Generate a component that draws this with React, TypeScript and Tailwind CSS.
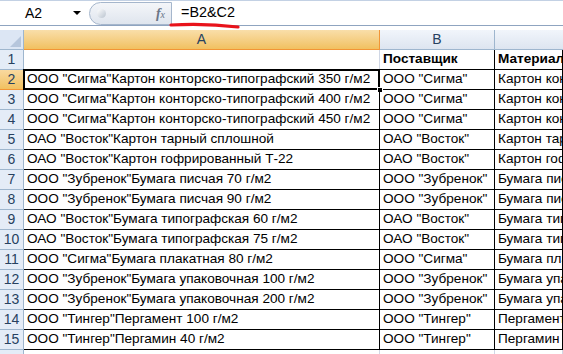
import React from 'react';

const rows: [string, string, string][] = [
  ['ООО "Сигма"Картон конторско-типографский 350 г/м2', 'ООО "Сигма"', 'Картон конторско-типографский 350 г/м2'],
  ['ООО "Сигма"Картон конторско-типографский 400 г/м2', 'ООО "Сигма"', 'Картон конторско-типографский 400 г/м2'],
  ['ООО "Сигма"Картон конторско-типографский 450 г/м2', 'ООО "Сигма"', 'Картон конторско-типографский 450 г/м2'],
  ['ОАО "Восток"Картон тарный сплошной', 'ОАО "Восток"', 'Картон тарный сплошной'],
  ['ОАО "Восток"Картон гофрированный Т-22', 'ОАО "Восток"', 'Картон гофрированный Т-22'],
  ['ООО "Зубренок"Бумага писчая 70 г/м2', 'ООО "Зубренок"', 'Бумага писчая 70 г/м2'],
  ['ООО "Зубренок"Бумага писчая 90 г/м2', 'ООО "Зубренок"', 'Бумага писчая 90 г/м2'],
  ['ОАО "Восток"Бумага типографская 60 г/м2', 'ОАО "Восток"', 'Бумага типографская 60 г/м2'],
  ['ОАО "Восток"Бумага типографская 75 г/м2', 'ОАО "Восток"', 'Бумага типографская 75 г/м2'],
  ['ООО "Сигма"Бумага плакатная 80 г/м2', 'ООО "Сигма"', 'Бумага плакатная 80 г/м2'],
  ['ООО "Зубренок"Бумага упаковочная 100 г/м2', 'ООО "Зубренок"', 'Бумага упаковочная 100 г/м2'],
  ['ООО "Зубренок"Бумага упаковочная 200 г/м2', 'ООО "Зубренок"', 'Бумага упаковочная 200 г/м2'],
  ['ООО "Тингер"Пергамент 100 г/м2', 'ООО "Тингер"', 'Пергамент 100 г/м2'],
  ['ООО "Тингер"Пергамин 40 г/м2', 'ООО "Тингер"', 'Пергамин 40 г/м2'],
];

const font = { fontFamily: '"Liberation Sans", Arial, sans-serif' };

const RowHead: React.FC<{ n: number; active?: boolean }> = ({ n, active }) => (
  <div
    className={
      'h-[20px] flex items-center justify-center text-[14px] border-r border-b ' +
      (active
        ? 'bg-gradient-to-b from-[#f9d99f] to-[#f1c15f] border-[#f29536] text-[#27415f]'
        : 'bg-[#e4ecf7] border-[#9eb6ce] text-[#27415f]')
    }
  >
    {n}
  </div>
);

const Cell: React.FC<{ children?: React.ReactNode; bold?: boolean; light?: boolean }> = ({ children, bold, light }) => (
  <div
    className={
      'h-[20px] pl-[3px] flex items-center overflow-hidden whitespace-nowrap text-[13.6px] text-black border-r border-b ' +
      (bold ? 'font-bold ' : '') +
      (light ? 'border-[#d0d7e5]' : 'border-black')
    }
  >
    {children}
  </div>
);

export default function App() {
  return (
    <div className="w-[563px] h-[354px] overflow-hidden bg-white relative" style={font}>
      {/* formula bar */}
      <div className="h-[25px] flex items-center border-t border-[#c3d1e4] bg-white">
        <div className="w-[89px] flex items-center pl-[25px] text-[14px] text-black">
          <span>A2</span>
          <span className="ml-auto mr-[8px] w-0 h-0 border-l-[4px] border-r-[4px] border-t-[4px] border-l-transparent border-r-transparent border-t-black" />
        </div>
        <div className="w-[83px] h-[23px] rounded-l-full border border-[#a5b6cc] bg-gradient-to-b from-[#f4f6f9] to-[#dfe5ee] flex items-center">
          <div className="w-[9px] h-[9px] rounded-full bg-gradient-to-br from-white to-[#b9c3cf] ml-[7px]" />
          <span className="ml-auto mr-[6px] text-[14px] italic text-[#6b7587]" style={{ fontFamily: '"Liberation Serif", serif' }}>
            <span className="font-bold">f</span><span className="text-[10px]">x</span>
          </span>
        </div>
        <div className="pl-[9px] text-[14.4px] text-black">=B2&amp;C2</div>
      </div>
      <div className="h-[1px] bg-[#8fa4c0]" />
      <div className="h-[4px] bg-white" />

      {/* red underline */}
      <svg className="absolute left-[168px] top-[20px]" width="74" height="10" viewBox="0 0 74 10">
        <path d="M3 5 C 20 4, 45 4, 70 7" stroke="#e8131b" strokeWidth="3.2" strokeLinecap="round" fill="none" />
      </svg>

      {/* grid */}
      <div className="grid grid-cols-[24px_356px_115px_1fr]">
        <div className="h-[20px] bg-[#dce6f4] border-r border-b border-[#9eb6ce] relative">
          <div className="absolute right-[2px] bottom-[2px]" style={{ borderBottom: '11px solid #b6c6dc', borderLeft: '11px solid transparent' }} />
        </div>
        <div className="h-[20px] flex items-center justify-center text-[14px] text-[#27415f] bg-gradient-to-b from-[#f9dea9] to-[#f1c15f] border-r border-b border-[#f29536]">A</div>
        <div className="h-[20px] flex items-center justify-center text-[14px] text-[#27415f] bg-gradient-to-b from-[#f1f5fb] to-[#dde5f0] border-r border-b border-[#9eb6ce]">B</div>
        <div className="h-[20px] bg-gradient-to-b from-[#f1f5fb] to-[#dde5f0] border-b border-[#9eb6ce]" />

        <RowHead n={1} />
        <Cell light />
        <Cell bold>Поставщик</Cell>
        <Cell bold>Материал</Cell>

        {rows.map((r, i) => (
          <React.Fragment key={i}>
            <RowHead n={i + 2} active={i === 0} />
            <div className="relative">
              <Cell>{r[0]}</Cell>
              {i === 0 && (
                <>
                  <div className="absolute -left-[1px] -top-[1px] right-0 bottom-0 border-2 border-black pointer-events-none" />
                  <div className="absolute -right-[3px] -bottom-[3px] w-[6px] h-[6px] bg-black border border-white" />
                </>
              )}
            </div>
            <Cell>{r[1]}</Cell>
            <Cell>{r[2]}</Cell>
          </React.Fragment>
        ))}

        <RowHead n={16} />
        <Cell light />
        <Cell light />
        <Cell light />
      </div>
    </div>
  );
}
